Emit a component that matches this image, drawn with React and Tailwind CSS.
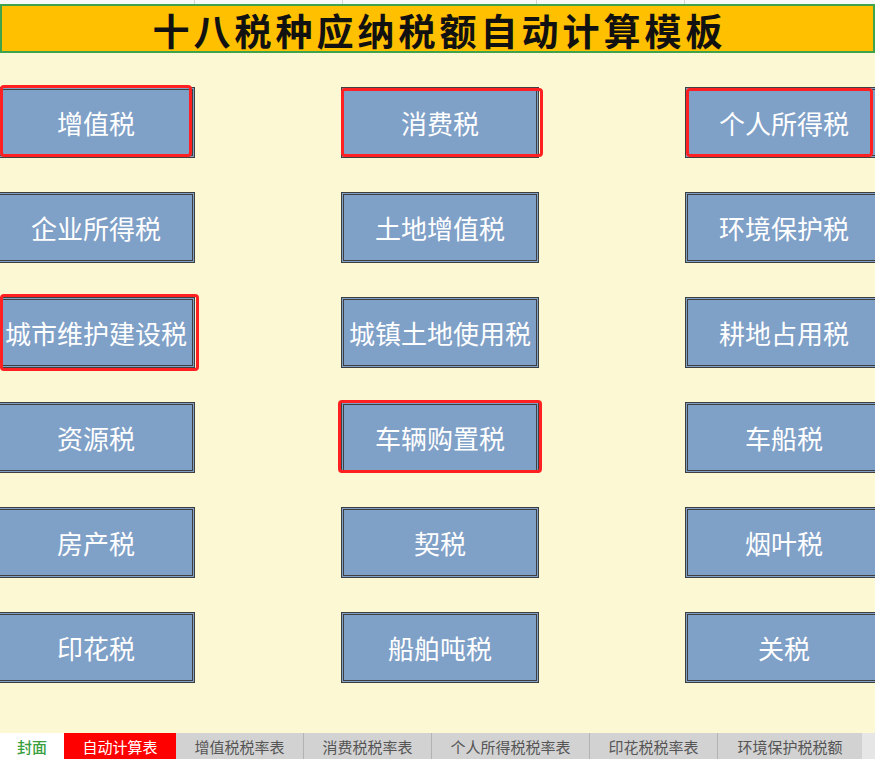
const cjk = "font-['Noto_Sans_CJK_SC','Noto_Sans_CJK_JP',sans-serif]"

// each tax button, with an optional hand-drawn red box on top of it
const taxes = [
  { name: '增值税', mark: 'left-[3px] right-[3px] -top-[2px] bottom-[1px]' },
  { name: '消费税', mark: 'left-0 -right-[4px] top-[1px] bottom-[1px]' },
  { name: '个人所得税', mark: 'left-[1px] right-[10px] top-[1px] bottom-[1px]' },
  { name: '企业所得税' },
  { name: '土地增值税' },
  { name: '环境保护税' },
  { name: '城市维护建设税', mark: 'left-[3px] -right-[4px] -top-[3px] -bottom-[3px]' },
  { name: '城镇土地使用税' },
  { name: '耕地占用税' },
  { name: '资源税' },
  { name: '车辆购置税', mark: '-left-[3px] -right-[3px] -top-[2px] bottom-0' },
  { name: '车船税' },
  { name: '房产税' },
  { name: '契税' },
  { name: '烟叶税' },
  { name: '印花税' },
  { name: '船舶吨税' },
  { name: '关税' },
]

const sheets = [
  { name: '封面', w: 'w-[64px]', cls: 'bg-white text-[#3a9f3e] font-medium' },
  { name: '自动计算表', w: 'w-[112px]', cls: 'bg-[#ff0000] text-white' },
  { name: '增值税税率表', w: 'w-[128px]', cls: 'bg-[#d2d2d2] text-[#555] border-r border-[#b3b3b3]' },
  { name: '消费税税率表', w: 'w-[128px]', cls: 'bg-[#d2d2d2] text-[#555] border-r border-[#b3b3b3]' },
  { name: '个人所得税税率表', w: 'w-[158px]', cls: 'bg-[#d2d2d2] text-[#555] border-r border-[#b3b3b3]' },
  { name: '印花税税率表', w: 'w-[128px]', cls: 'bg-[#d2d2d2] text-[#555] border-r border-[#b3b3b3]' },
  { name: '环境保护税税额', w: 'w-[144px]', cls: 'bg-[#d2d2d2] text-[#555]' },
]

function TaxButton({ tax }) {
  return (
    <div className="relative h-[71px]">
      <div className="h-full border-[3px] border-double border-[#3f3f3f] bg-[#7fa0c7] text-white text-[26px] leading-none flex items-center justify-center whitespace-nowrap">
        {tax.name}
      </div>
      {tax.mark && (
        <div className={`absolute ${tax.mark} border-[3px] border-[#ff2121] rounded-[4px] pointer-events-none`} />
      )}
    </div>
  )
}

export default function App() {
  return (
    <div className={`w-[875px] h-[759px] overflow-hidden bg-[#fbf8d3] flex flex-col ${cjk}`}>
      {/* sliver of the row above the title, with its gridlines */}
      <div className="h-[4px] flex bg-[#f8f8f8] shrink-0">
        <div className="w-[195px] border-r border-[#d4d4d4]" />
        <div className="w-[148px] border-r border-[#d4d4d4]" />
        <div className="w-[194px] border-r border-[#d4d4d4]" />
        <div className="w-[148px] border-r border-[#d4d4d4]" />
        <div className="flex-1" />
      </div>

      <div className="h-[49px] shrink-0 border-2 border-[#3fa34b] bg-[#ffc000] flex items-center justify-center pt-[3px] pl-[4px]">
        <h1 className="text-[37px] font-bold text-[#111] tracking-[4px] leading-none">
          十八税种应纳税额自动计算模板
        </h1>
      </div>

      <main className="flex-1 pt-[34px]">
        <div className="grid grid-cols-[198px_198px_198px] gap-x-[146px] gap-y-[34px] -ml-[3px]">
          {taxes.map((t) => (
            <TaxButton key={t.name} tax={t} />
          ))}
        </div>
      </main>

      <div className="h-[26px] shrink-0 flex text-[15px] leading-none">
        {sheets.map((s) => (
          <div key={s.name} className={`${s.w} ${s.cls} flex items-center justify-center whitespace-nowrap`}>
            {s.name}
          </div>
        ))}
        <div className="flex-1 bg-[#e6e6e6]" />
      </div>
    </div>
  )
}
